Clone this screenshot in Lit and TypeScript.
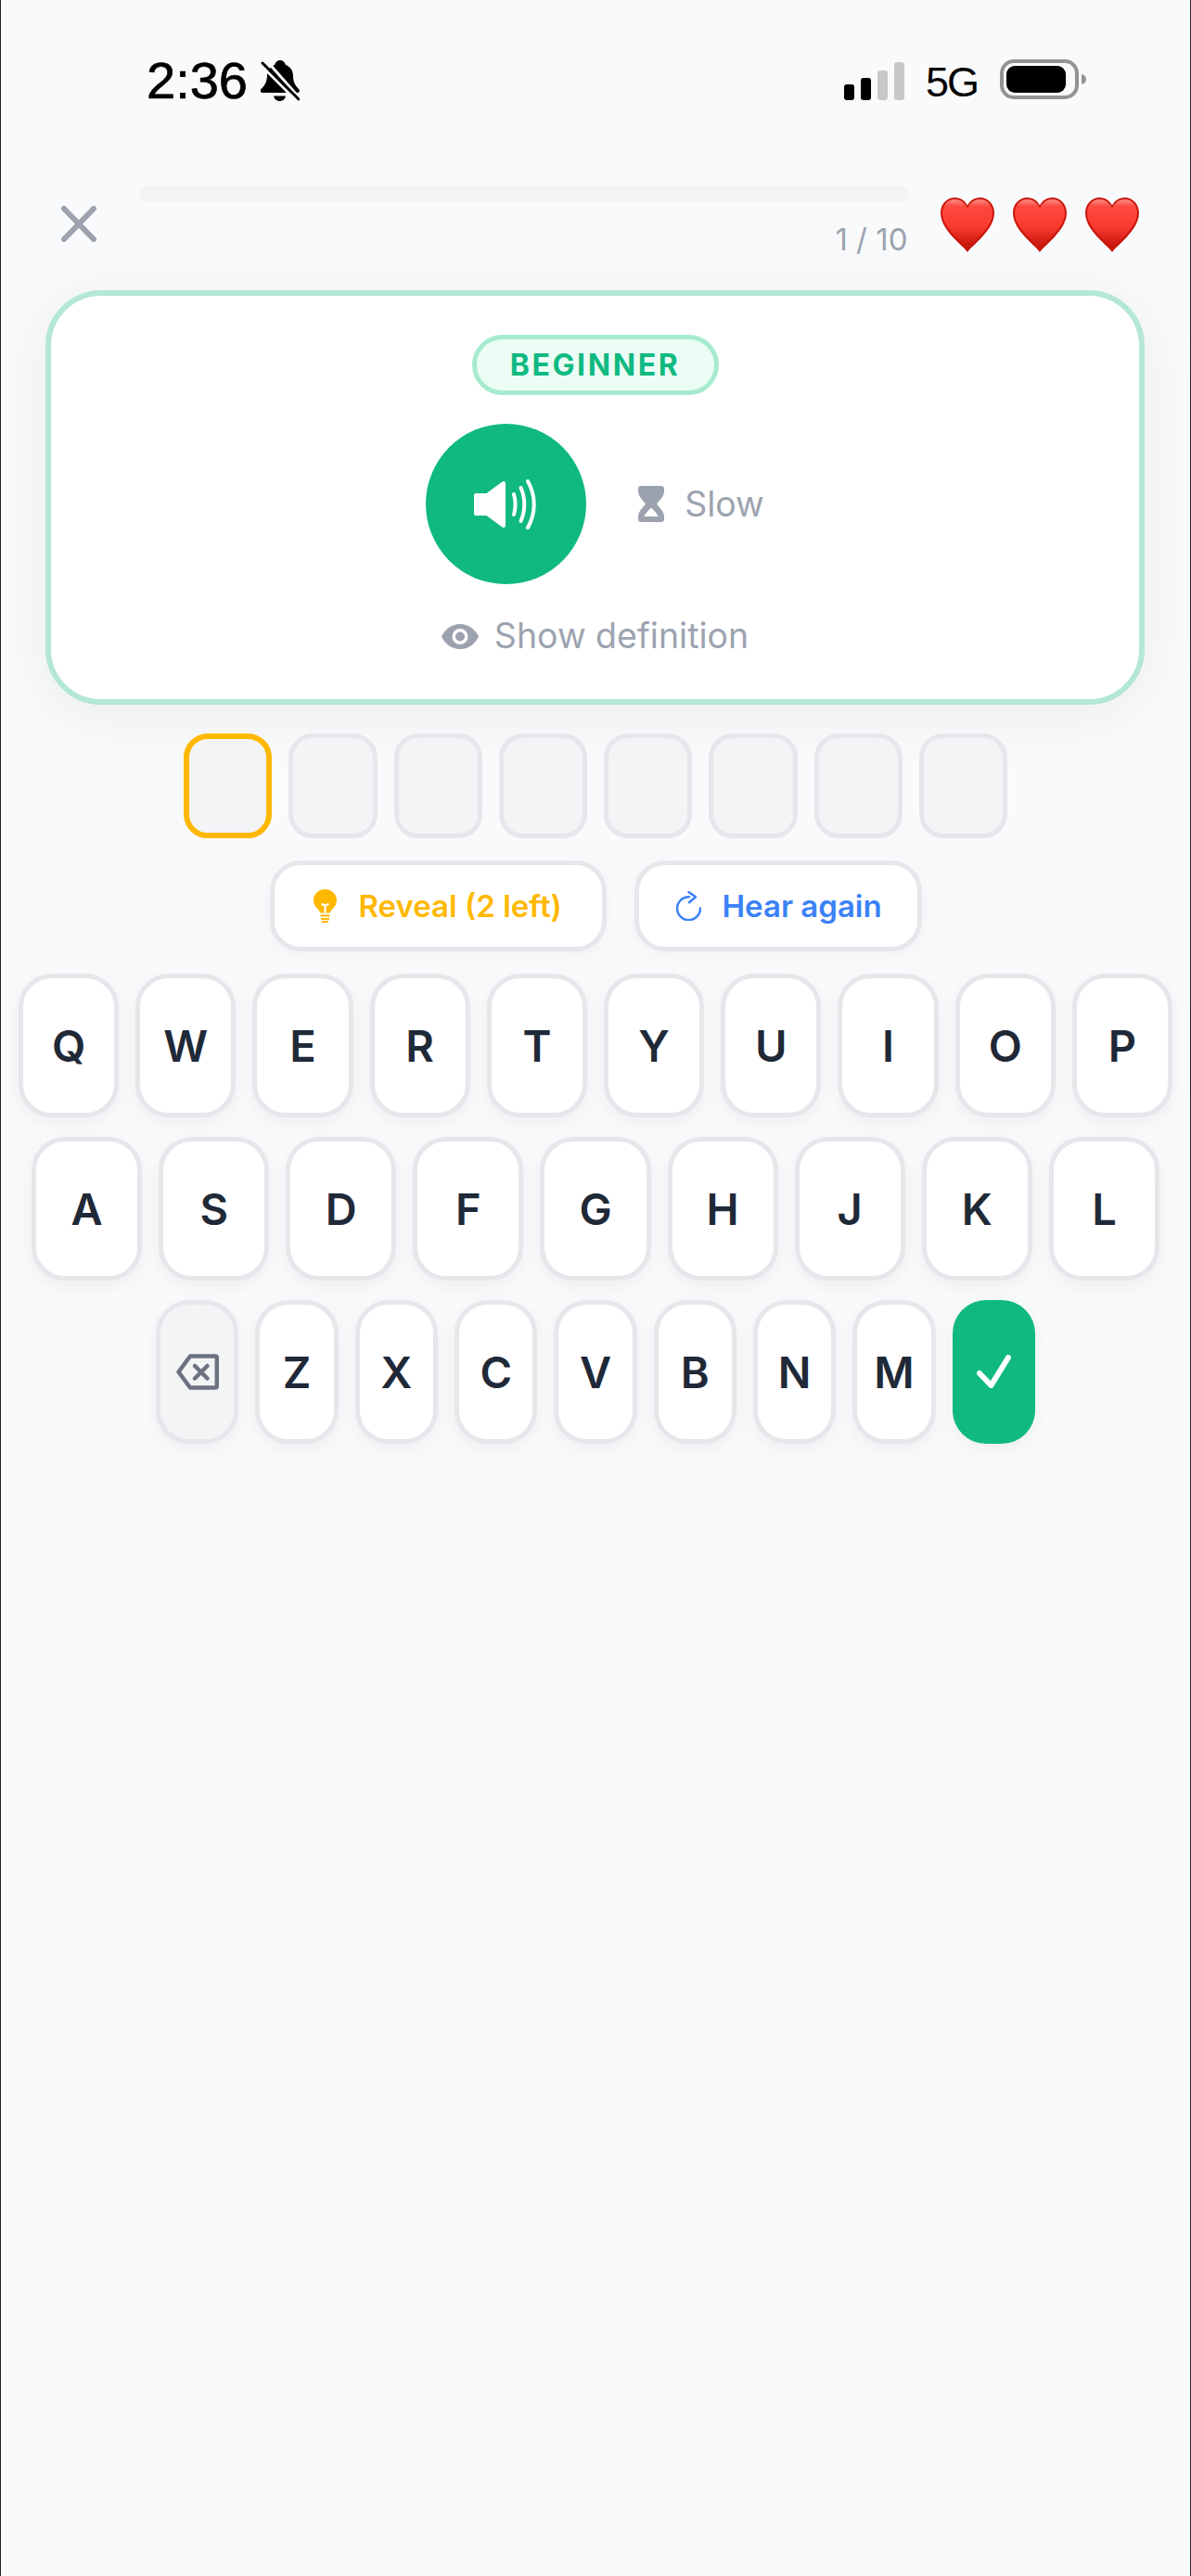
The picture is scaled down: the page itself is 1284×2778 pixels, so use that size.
import { LitElement, html, css, svg } from 'lit';
import { customElement } from 'lit/decorators.js';

const ROW_1 = ['Q', 'W', 'E', 'R', 'T', 'Y', 'U', 'I', 'O', 'P'];
const ROW_2 = ['A', 'S', 'D', 'F', 'G', 'H', 'J', 'K', 'L'];
const ROW_3 = ['Z', 'X', 'C', 'V', 'B', 'N', 'M'];
const SLOT_COUNT = 8;

const heart = (id: string) => svg`
  <svg class="heart" viewBox="0 0 58 59">
    <defs>
      <linearGradient id=${id} x1="0" y1="0" x2="0" y2="1">
        <stop offset="0" stop-color="#ff8f86" />
        <stop offset="0.14" stop-color="#fb4a40" />
        <stop offset="0.55" stop-color="#fa3a30" />
        <stop offset="1" stop-color="#c21208" />
      </linearGradient>
    </defs>
    <path
      d="M29 59C26 53 0 36 0 16.500 0 7 7 0 15.500 0 21.500 0 26.500 3.500 29 8.500 31.500 3.500 36.500 0 42.500 0 51 0 58 7 58 16.500 58 36 32 53 29 59Z"
      fill="#c8160c"
    />
    <path
      d="M29 55C25 49 2 34 2 16.500 2 8 8 2 15.500 2 21.500 2 27 6 29 12 31 6 36.500 2 42.500 2 50 2 56 8 56 16.500 56 34 33 49 29 55Z"
      fill="url(#${id})"
    />
  </svg>
`;

@customElement('app-root')
export class AppRoot extends LitElement {
  static styles = css`
    :host {
      display: block;
      font-family: Inter, 'Liberation Sans', sans-serif;
    }
    .screen {
      box-sizing: border-box;
      width: 1284px;
      min-height: 2778px;
      background: #f9fafb;
      border-left: 1px solid #222;
      border-right: 1px solid #222;
      display: flex;
      flex-direction: column;
    }

    .status {
      height: 200px;
      box-sizing: border-box;
      padding: 60px 112px 0 157px;
      display: flex;
      justify-content: space-between;
      align-items: flex-start;
      color: #000;
    }
    .status-left {
      display: flex;
      align-items: center;
      gap: 14px;
    }
    .time {
      font-family: 'Liberation Sans', sans-serif;
      font-size: 56px;
      line-height: 54px;
      -webkit-text-stroke: 0.7px #000;
    }
    .status-right {
      display: flex;
      align-items: center;
      height: 54px;
    }
    .net {
      font-family: 'Liberation Sans', sans-serif;
      font-size: 45px;
      line-height: 50px;
      letter-spacing: -2px;
      margin: 3px 24px 0 23px;
    }
    .bell { width: 42px; height: 44px; }
    .signal { width: 65px; height: 41px; }
    .battery { width: 93px; height: 43px; margin-top: -3px; }

    .topbar {
      display: flex;
      height: 113px;
      box-sizing: border-box;
      padding-left: 64.5px;
    }
    .close {
      width: 38px;
      height: 39px;
      margin-top: 22px;
    }
    .progress {
      width: 828.5px;
      margin-left: 46.5px;
      display: flex;
      flex-direction: column;
      align-items: flex-end;
    }
    .track {
      width: 100%;
      height: 18px;
      border-radius: 9px;
      background: #f3f4f6;
    }
    .count {
      font-size: 33px;
      line-height: 40px;
      color: #9ca3af;
      margin-top: 20px;
    }
    .hearts {
      display: flex;
      gap: 20px;
      margin-left: 35px;
      padding-top: 13px;
    }
    .heart { width: 58px; height: 59px; }

    .card {
      box-sizing: border-box;
      margin: 0 49px 0 48px;
      height: 447px;
      background: #fff;
      border: 6px solid #b4e8d4;
      border-radius: 60px;
      box-shadow: 0 10px 70px rgba(0, 0, 0, 0.06);
      display: flex;
      flex-direction: column;
      align-items: center;
      padding-top: 42px;
    }
    .badge {
      box-sizing: border-box;
      width: 266px;
      height: 65px;
      border: 5px solid #a7ebcf;
      border-radius: 33px;
      background: #ecfdf5;
      color: #10b981;
      font-size: 32px;
      font-weight: 700;
      letter-spacing: 2.6px;
      display: flex;
      align-items: center;
      justify-content: center;
    }
    .audio {
      display: flex;
      align-items: center;
      margin-top: 31px;
      height: 173px;
    }
    .play {
      flex: none;
      width: 173px;
      height: 173px;
      border-radius: 50%;
      background: #10b981;
      display: flex;
      align-items: center;
      justify-content: center;
    }
    .play svg { width: 69px; height: 54px; }
    .slow {
      display: flex;
      align-items: center;
      gap: 22px;
      margin-left: 56px;
      font-size: 37.5px;
      color: #9ca3af;
    }
    .hourglass { width: 28px; height: 39px; }
    .reveal-def {
      display: flex;
      align-items: center;
      gap: 17px;
      margin-top: 32px;
      font-size: 37.5px;
      line-height: 48px;
      color: #9ca3af;
    }
    .eye { width: 40px; height: 27px; }

    .slots {
      display: flex;
      justify-content: center;
      gap: 18px;
      margin-top: 31px;
    }
    .slot {
      box-sizing: border-box;
      width: 95.25px;
      height: 113px;
      border: 5px solid #e5e7eb;
      border-radius: 26px;
      background: #f3f4f6;
    }
    .slot.active {
      border: 6px solid #ffb800;
    }

    .actions {
      display: flex;
      justify-content: center;
      gap: 30px;
      margin-top: 24px;
    }
    .action {
      box-sizing: border-box;
      height: 98px;
      border: 5px solid #e5e7eb;
      border-radius: 33px;
      background: #fff;
      box-shadow: 0 4px 18px rgba(0, 0, 0, 0.04);
      display: flex;
      align-items: center;
      font-size: 33px;
      font-weight: 600;
    }
    .action.reveal {
      width: 363px;
      color: #ffb800;
      padding-left: 42px;
      gap: 24px;
    }
    .action.hear {
      width: 310px;
      color: #3b82f6;
      padding-left: 40px;
      gap: 23px;
    }
    .bulb { width: 25px; height: 36px; }
    .refresh { width: 27px; height: 32px; }

    .keyboard {
      display: flex;
      flex-direction: column;
      gap: 21.5px;
      padding: 24px 19px 0;
    }
    .row {
      display: flex;
      justify-content: center;
      gap: 18px;
    }
    .row.middle { padding: 0 14px; }
    .key {
      box-sizing: border-box;
      flex: 1;
      height: 154.5px;
      border: 5px solid #e5e7eb;
      border-radius: 36px;
      background: #fff;
      box-shadow: 0 6px 20px rgba(0, 0, 0, 0.05);
      color: #1f2937;
      font-size: 47px;
      font-weight: 600;
      display: flex;
      align-items: center;
      justify-content: center;
    }
    .row.bottom .key {
      flex: none;
      width: 89.3px;
    }
    .key.back { background: #f3f4f6; }
    .key.back svg { width: 46px; height: 39px; }
    .key.submit {
      border: none;
      background: #10b981;
    }
    .key.submit svg { width: 37px; height: 36px; }
  `;

  render() {
    return html`
      <div class="screen">
        <div class="status">
          <div class="status-left">
            <span class="time">2:36</span>
            <svg class="bell" viewBox="0 0 42 44">
              <path
                d="M21 0c3 0 5 2 6 5 5 2 8 6 8 12 0 7 3 11 6 14 1.500 1.500 1 4-1.500 4H2c-2.500 0-3-2.500-1.500-4C4 28 6.500 24 7 17c0-6 4-10 8-12 1-3 3-5 6-5Z"
                fill="#000"
              />
              <path d="M14 38.500h13c-.5 3-3 5.500-6.500 5.500S14.500 41.500 14 38.500Z" fill="#000" />
              <path d="M-2 3l42 42" stroke="#f9fafb" stroke-width="3" />
              <path d="M6 0l38 43" stroke="#f9fafb" stroke-width="3" />
              <path d="M2 3l39 39" stroke="#000" stroke-width="3" stroke-linecap="round" />
            </svg>
          </div>
          <div class="status-right">
            <svg class="signal" viewBox="0 0 65 41">
              <rect x="0" y="24" width="11" height="17" rx="3" fill="#000" />
              <rect x="18" y="17" width="11" height="24" rx="3" fill="#000" />
              <rect x="36" y="9" width="11" height="32" rx="3" fill="#c7c8c9" />
              <rect x="54" y="0" width="11" height="41" rx="3" fill="#c7c8c9" />
            </svg>
            <span class="net">5G</span>
            <svg class="battery" viewBox="0 0 93 43">
              <rect x="2" y="2" width="81" height="39" rx="13" fill="none" stroke="#929394" stroke-width="4" />
              <rect x="7" y="7" width="64" height="29" rx="9" fill="#000" />
              <path d="M88 16c2.800.5 5 2.500 5 5.500s-2.200 5-5 5.500Z" fill="#929394" />
            </svg>
          </div>
        </div>

        <div class="topbar">
          <svg class="close" viewBox="0 0 38 39">
            <path d="M3 3l32 33M35 3L3 36" stroke="#9ca3af" stroke-width="6" stroke-linecap="round" fill="none" />
          </svg>
          <div class="progress">
            <div class="track"></div>
            <div class="count">1 / 10</div>
          </div>
          <div class="hearts">${heart('h1')}${heart('h2')}${heart('h3')}</div>
        </div>

        <div class="card">
          <div class="badge">BEGINNER</div>
          <div class="audio">
            <div class="play">
              <svg viewBox="0 0 69 54">
                <path
                  d="M2 15h11.500L30.500 2.500c1.500-1 3.500-.3 3.500 1.800v45.400c0 2.100-2 2.800-3.500 1.800L13.500 39H2c-1.200 0-2-.8-2-2V17c0-1.200.8-2 2-2Z"
                  fill="#fff"
                />
                <g fill="none" stroke="#fff" stroke-width="4" stroke-linecap="round">
                  <path d="M43 16c2 7 2 15 0 22" />
                  <path d="M50.500 9c5 11 5 25 0 36" />
                  <path d="M58 2c9 16 9 34 0 50" />
                </g>
              </svg>
            </div>
            <div class="slow">
              <svg class="hourglass" viewBox="0 0 28 39">
                <path
                  d="M3 0h22c1.800 0 3 1.200 3 3v3c0 5-4.500 9-8 13.500 3.500 4.500 8 8.500 8 13.500v3c0 1.800-1.200 3-3 3H3c-1.800 0-3-1.200-3-3v-3c0-5 4.500-9 8-13.500C4.500 15 0 11 0 6V3C0 1.200 1.200 0 3 0Z"
                  fill="#9ca3af"
                />
                <path d="M6.500 33c.8-3 4.500-6.500 7.500-9.500 3 3 6.700 6.500 7.500 9.500Z" fill="#fff" />
              </svg>
              <span>Slow</span>
            </div>
          </div>
          <div class="reveal-def">
            <svg class="eye" viewBox="0 0 40 27">
              <path d="M0 13.500C4 5 11.500 0 20 0s16 5 20 13.500C36 22 28.500 27 20 27S4 22 0 13.500Z" fill="#9ca3af" />
              <circle cx="20" cy="13.500" r="8.500" fill="#fff" />
              <circle cx="20" cy="13.500" r="5" fill="#9ca3af" />
            </svg>
            <span>Show definition</span>
          </div>
        </div>

        <div class="slots">
          ${Array.from({ length: SLOT_COUNT }, (_, i) =>
            html`<div class="slot ${i === 0 ? 'active' : ''}"></div>`
          )}
        </div>

        <div class="actions">
          <div class="action reveal">
            <svg class="bulb" viewBox="0 0 25 36">
              <path
                d="M12.500 0C5.600 0 0 5.300 0 12c0 3.800 1.700 6.300 3.800 8.500 1.500 1.600 2.800 3 3.200 5h11c.4-2 1.700-3.400 3.200-5C23.300 18.300 25 15.800 25 12 25 5.300 19.400 0 12.500 0Z"
                fill="#ffb800"
              />
              <path d="M8.500 15.500c1.500 1.500 2.800 1.800 4 1.800s2.500-.3 4-1.800M12.500 17v8.500" stroke="#fff" stroke-width="2.200" fill="none" />
              <path d="M7.500 28.500h10M8 32h9M9 35h7" stroke="#ffb800" stroke-width="2" fill="none" />
            </svg>
            <span>Reveal (2 left)</span>
          </div>
          <div class="action hear">
            <svg class="refresh" viewBox="0 0 27 32">
              <path
                d="M14 6.200A12.500 12.500 0 1 0 26 18.500"
                fill="none"
                stroke="#3b82f6"
                stroke-width="2.500"
                stroke-linecap="round"
              />
              <path d="M13.500 1l7.500 5.200-7 6" fill="none" stroke="#3b82f6" stroke-width="2.500" stroke-linecap="round" stroke-linejoin="round" />
            </svg>
            <span>Hear again</span>
          </div>
        </div>

        <div class="keyboard">
          <div class="row">${ROW_1.map((k) => html`<div class="key">${k}</div>`)}</div>
          <div class="row middle">${ROW_2.map((k) => html`<div class="key">${k}</div>`)}</div>
          <div class="row bottom">
            <div class="key back">
              <svg viewBox="0 0 46 39">
                <path
                  d="M15 2.500h27c1 0 1.800.8 1.800 1.800v30.400c0 1-.8 1.800-1.800 1.800H15L2.500 19.500Z"
                  fill="none"
                  stroke="#6b7280"
                  stroke-width="4.500"
                  stroke-linejoin="round"
                />
                <path d="M20 13l13.500 13.500M33.500 13L20 26.500" stroke="#6b7280" stroke-width="4.500" stroke-linecap="round" />
              </svg>
            </div>
            ${ROW_3.map((k) => html`<div class="key">${k}</div>`)}
            <div class="key submit">
              <svg viewBox="0 0 37 36">
                <path d="M3 20l12.500 13L34 3" fill="none" stroke="#fff" stroke-width="6" stroke-linecap="round" stroke-linejoin="round" />
              </svg>
            </div>
          </div>
        </div>
      </div>
    `;
  }
}
